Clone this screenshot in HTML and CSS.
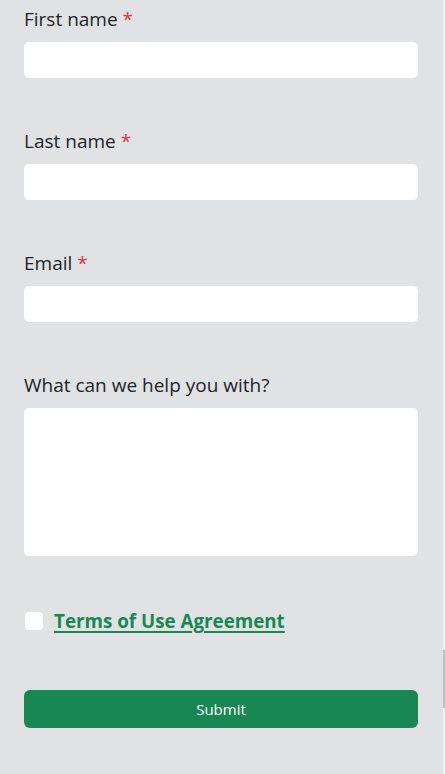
FILE: index.html
```html
<!DOCTYPE html>
<html lang="en">
<head>
<meta charset="utf-8">
<title>Contact form</title>
<link rel="stylesheet" href="styles.css">
</head>
<body>
<form class="form">
  <div class="field">
    <label class="label" for="fn">First name <span class="req">*</span></label>
    <input class="input" id="fn" type="text">
  </div>
  <div class="field">
    <label class="label" for="ln">Last name <span class="req">*</span></label>
    <input class="input" id="ln" type="text">
  </div>
  <div class="field">
    <label class="label" for="em">Email <span class="req">*</span></label>
    <input class="input" id="em" type="email">
  </div>
  <div class="field">
    <label class="label" for="msg">What can we help you with?</label>
    <textarea class="input textarea" id="msg"></textarea>
  </div>
  <div class="check-row">
    <span class="checkbox"></span>
    <a class="terms" href="#">Terms of Use Agreement</a>
  </div>
  <button class="submit" type="button">Submit</button>
</form>
<div class="scrollbar"><div class="thumb"></div></div>
</body>
</html>
```
FILE: styles.css
```css
* { box-sizing: border-box; }
html, body { margin: 0; padding: 0; }
body {
  background: #e1e2e4;
  font-family: "Open Sans", "Noto Sans", sans-serif;
  color: #212529;
  overflow: hidden;
}
.form {
  width: 394px;
  margin-left: 24px;
  padding-top: 6px;
  display: flex;
  flex-direction: column;
}
.field {
  display: flex;
  flex-direction: column;
  gap: 9px;
  margin-bottom: 50px;
}
.field:nth-child(4) { margin-bottom: 54px; }
.label {
  font-size: 19px;
  line-height: 27px;
  height: 27px;
}
.req { color: #dc3545; }
.input {
  display: block;
  width: 100%;
  height: 36px;
  border: none;
  border-radius: 5px;
  background: #fff;
  font: inherit;
}
.textarea { height: 148px; resize: none; }
.check-row {
  display: flex;
  align-items: center;
  gap: 11px;
  margin-left: 1px;
  height: 22px;
  margin-bottom: 58px;
}
.checkbox {
  width: 18px;
  height: 18px;
  background: #fff;
  border-radius: 4px;
}
.terms {
  color: #198754;
  font-weight: 700;
  font-size: 18.8px;
  line-height: 22px;
  text-decoration: underline;
  text-decoration-thickness: 2px;
  text-underline-offset: 3px;
}
.submit {
  height: 38px;
  width: 100%;
  border: none;
  border-radius: 6px;
  background: #198754;
  color: #fff;
  font-family: inherit;
  font-size: 15px;
}
.scrollbar {
  position: fixed;
  top: 0;
  right: 0;
  width: 2px;
  height: 100%;
  background: #f1f1f1;
}
.thumb {
  margin-top: 650px;
  height: 58px;
  background: #c1c1c1;
}
```
